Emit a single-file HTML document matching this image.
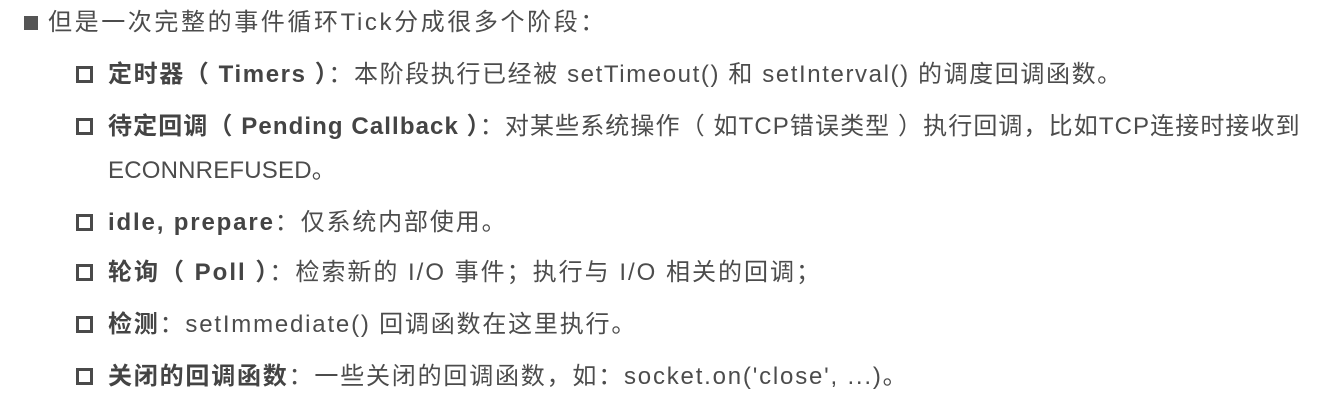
<!DOCTYPE html>
<html><head><meta charset="utf-8"><style>
body{margin:0;background:#fff;width:1338px;height:400px;overflow:hidden;font-family:"Liberation Sans","Noto Sans CJK SC",sans-serif;color:#4c4c4c;font-size:24px;letter-spacing:1.3px}
.l{position:absolute;white-space:nowrap;line-height:30px}
b{font-weight:bold;color:#444}
.fs{position:absolute;left:24px;top:16px;width:14px;height:14px;background:#555}
.hs{position:absolute;width:11px;height:11px;border:3px solid #4a4a4a}
</style></head><body>
<div class="fs"></div>
<div class="l" style="left:48px;top:8px;letter-spacing:2.6px">但是一次完整的事件循环Tick分成很多个阶段：</div>

<div class="hs" style="left:76px;top:66px"></div>
<div class="l" style="left:108px;top:60px;letter-spacing:1.6px"><b>定时器（ Timers ）</b>：本阶段执行已经被 setTimeout() 和 setInterval() 的调度回调函数。</div>

<div class="hs" style="left:76px;top:118px"></div>
<div class="l" style="left:108px;top:112px;letter-spacing:1.1px"><b>待定回调（ Pending Callback ）</b>：对某些系统操作（ 如TCP错误类型 ）执行回调，比如TCP连接时接收到</div>
<div class="l" style="left:108px;top:156px;letter-spacing:0.2px">ECONNREFUSED。</div>

<div class="hs" style="left:76px;top:214px"></div>
<div class="l" style="left:108px;top:208px;letter-spacing:1.85px"><b>idle, prepare</b>：仅系统内部使用。</div>

<div class="hs" style="left:76px;top:264px"></div>
<div class="l" style="left:108px;top:258px;letter-spacing:2px"><b>轮询（ Poll ）</b>：检索新的 I/O 事件；执行与 I/O 相关的回调；</div>

<div class="hs" style="left:76px;top:316px"></div>
<div class="l" style="left:108px;top:310px;letter-spacing:1.8px"><b>检测</b>：setImmediate() 回调函数在这里执行。</div>

<div class="hs" style="left:76px;top:368px"></div>
<div class="l" style="left:108px;top:362px;letter-spacing:1.8px"><b>关闭的回调函数</b>：一些关闭的回调函数，如：socket.on('close', ...)。</div>
</body></html>
